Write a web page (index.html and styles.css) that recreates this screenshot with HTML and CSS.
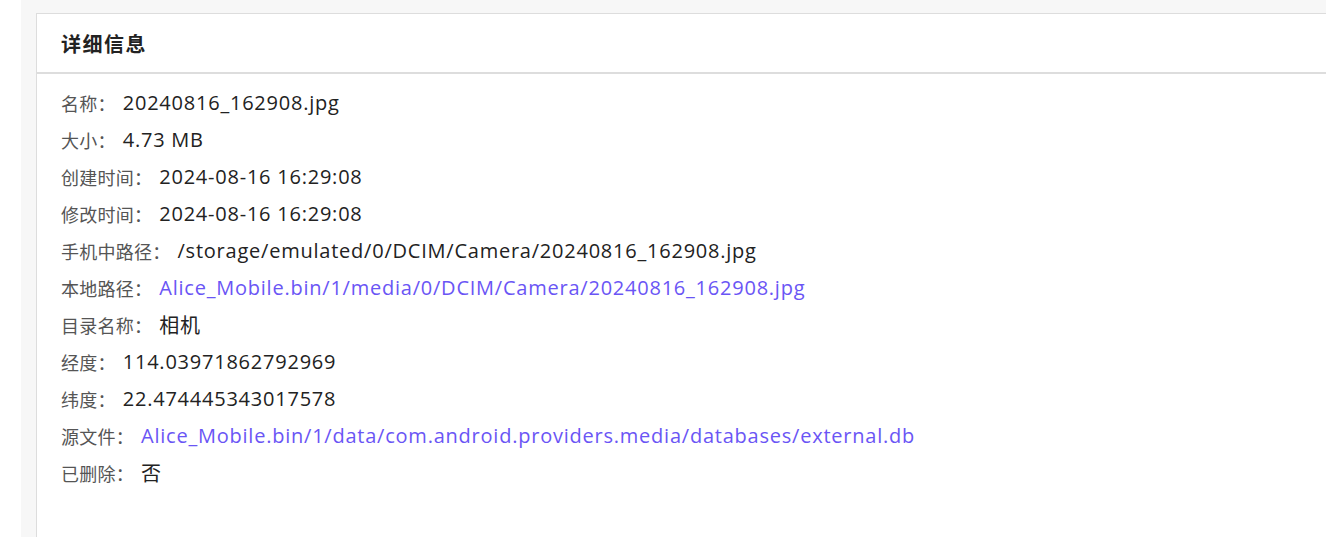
FILE: index.html
```html
<!DOCTYPE html>
<html lang="zh-CN">
<head>
<meta charset="utf-8">
<title>详细信息</title>
<link rel="stylesheet" href="styles.css">
</head>
<body>
<div class="page">
  <div class="side"></div>
  <div class="main">
    <section class="card">
      <header class="card-head">详细信息</header>
      <div class="card-body">
        <div class="row"><span class="label">名称：</span><span class="value">20240816_162908.jpg</span></div>
        <div class="row"><span class="label">大小：</span><span class="value">4.73 MB</span></div>
        <div class="row"><span class="label">创建时间：</span><span class="value">2024-08-16 16:29:08</span></div>
        <div class="row"><span class="label">修改时间：</span><span class="value">2024-08-16 16:29:08</span></div>
        <div class="row"><span class="label">手机中路径：</span><span class="value">/storage/emulated/0/DCIM/Camera/20240816_162908.jpg</span></div>
        <div class="row"><span class="label">本地路径：</span><a class="value link" href="#">Alice_Mobile.bin/1/media/0/DCIM/Camera/20240816_162908.jpg</a></div>
        <div class="row"><span class="label">目录名称：</span><span class="value">相机</span></div>
        <div class="row"><span class="label">经度：</span><span class="value">114.03971862792969</span></div>
        <div class="row"><span class="label">纬度：</span><span class="value">22.474445343017578</span></div>
        <div class="row"><span class="label">源文件：</span><a class="value link" href="#">Alice_Mobile.bin/1/data/com.android.providers.media/databases/external.db</a></div>
        <div class="row"><span class="label">已删除：</span><span class="value">否</span></div>
      </div>
    </section>
  </div>
</div>
</body>
</html>
```

FILE: styles.css
```css
html, body {
  margin: 0;
  padding: 0;
  height: 100%;
  background: #ffffff;
  font-family: "Open Sans", "Noto Sans CJK SC", sans-serif;
  overflow: hidden;
}
.page {
  display: flex;
  height: 100%;
}
.side {
  width: 21px;
  flex: none;
  background: #ffffff;
}
.main {
  flex: 1;
  background: #f7f7f7;
  padding: 13px 0 0 15px;
  min-width: 0;
}
.card {
  background: #ffffff;
  border-top: 1px solid #dddddd;
  border-left: 1px solid #dddddd;
  height: 100%;
  box-sizing: border-box;
}
.card-head {
  height: 58px;
  display: flex;
  align-items: center;
  padding-left: 24px;
  border-bottom: 2px solid #dddddd;
  font-family: "Noto Sans CJK SC", sans-serif;
  font-size: 20px;
  letter-spacing: 1.5px;
  font-weight: 700;
  color: #222222;
}
.card-body {
  padding: 10px 0 0 24px;
}
.row {
  height: 37px;
  display: flex;
  align-items: center;
  white-space: nowrap;
}
.label {
  font-family: "Noto Sans CJK SC", sans-serif;
  font-size: 18px;
  letter-spacing: 0.25px;
  color: #555555;
  margin-right: 7px;
}
.value {
  font-size: 20px;
  letter-spacing: 0.77px;
  color: #222222;
}
.link {
  color: #6a55f5;
  text-decoration: none;
}
```
